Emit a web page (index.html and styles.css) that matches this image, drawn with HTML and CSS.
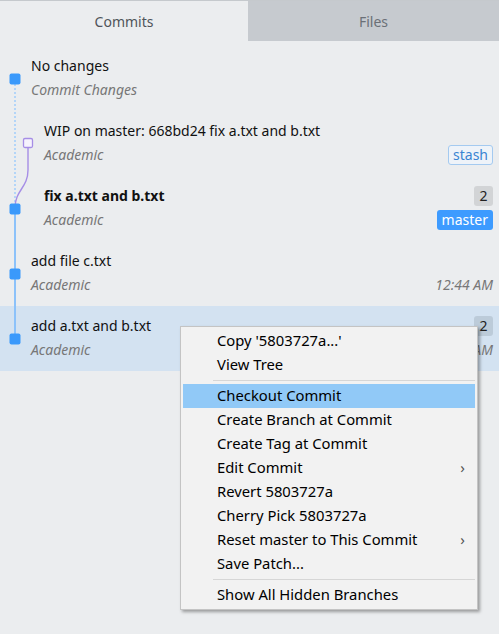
FILE: index.html
```html
<!DOCTYPE html>
<html>
<head>
<meta charset="utf-8">
<link rel="stylesheet" href="styles.css">
</head>
<body>
<div class="app">
  <div class="tabs">
    <div class="tab active">Commits</div>
    <div class="tab">Files</div>
  </div>
  <div class="list">
    <svg class="graph" width="40" height="330" viewBox="0 0 40 330">
      <line x1="15" y1="38" x2="15" y2="160" stroke="#b3d5f8" stroke-width="2" stroke-dasharray="2 2"/>
      <path d="M28 101 L28 124 C28 142 15 144 15 162" fill="none" stroke="#a68ee6" stroke-width="1.4"/>
      <line x1="15" y1="164" x2="15" y2="293" stroke="#8cc2fa" stroke-width="2"/>
      <rect x="9.5" y="27.5" width="11" height="11" rx="2" fill="#3a99fb"/>
      <rect x="23.5" y="92.5" width="9" height="9" rx="1.5" fill="#f6f3fd" stroke="#a68ee6" stroke-width="1.3"/>
      <rect x="9.5" y="157.5" width="11" height="11" rx="2" fill="#3a99fb"/>
      <rect x="9.5" y="222.5" width="11" height="11" rx="2" fill="#3a99fb"/>
      <rect x="9.5" y="287.5" width="11" height="11" rx="2" fill="#3a99fb"/>
    </svg>
    <div class="row">
      <div class="text">
        <div class="title">No changes</div>
        <div class="sub">Commit Changes</div>
      </div>
    </div>
    <div class="row indent">
      <div class="text">
        <div class="title">WIP on master: 668bd24 fix a.txt and b.txt</div>
        <div class="sub">Academic</div>
      </div>
      <div class="meta">
        <div class="line"></div>
        <div class="line"><span class="badge stash">stash</span></div>
      </div>
    </div>
    <div class="row indent">
      <div class="text">
        <div class="title bold">fix a.txt and b.txt</div>
        <div class="sub">Academic</div>
      </div>
      <div class="meta">
        <div class="line"><span class="badge count">2</span></div>
        <div class="line"><span class="badge master">master</span></div>
      </div>
    </div>
    <div class="row">
      <div class="text">
        <div class="title">add file c.txt</div>
        <div class="sub">Academic</div>
      </div>
      <div class="meta">
        <div class="line"></div>
        <div class="line"><span class="time">12:44 AM</span></div>
      </div>
    </div>
    <div class="row selected">
      <div class="text">
        <div class="title">add a.txt and b.txt</div>
        <div class="sub">Academic</div>
      </div>
      <div class="meta">
        <div class="line"><span class="badge count dark">2</span></div>
        <div class="line"><span class="time">12:44 AM</span></div>
      </div>
    </div>
  </div>

  <div class="menu">
    <div class="item">Copy '5803727a...'</div>
    <div class="item">View Tree</div>
    <div class="sep"></div>
    <div class="item hover">Checkout Commit</div>
    <div class="item">Create Branch at Commit</div>
    <div class="item">Create Tag at Commit</div>
    <div class="item">Edit Commit<span class="arrow">›</span></div>
    <div class="item">Revert 5803727a</div>
    <div class="item">Cherry Pick 5803727a</div>
    <div class="item">Reset master to This Commit<span class="arrow">›</span></div>
    <div class="item">Save Patch...</div>
    <div class="sep"></div>
    <div class="item">Show All Hidden Branches</div>
  </div>
</div>
</body>
</html>
```

FILE: styles.css
```css
* { box-sizing: border-box; }
html, body {
  margin: 0;
  padding: 0;
  background: #ebedef;
}
body {
  font-family: "Noto Sans", "Open Sans", sans-serif;
  font-size: 14px;
  color: #111;
  width: 499px;
  height: 634px;
  overflow: hidden;
}
.app {
  position: relative;
  height: 634px;
  border-top: 1px solid #c5c9cd;
}
.tabs {
  display: flex;
  height: 40px;
}
.tab {
  flex: 1;
  display: flex;
  align-items: center;
  justify-content: center;
  font-size: 14px;
  color: #6b7077;
  background: #c6cacf;
}
.tab.active {
  background: #ebedef;
  color: #4f545a;
  flex: 0 0 248px;
}
.list {
  position: relative;
  margin-top: 5px;
}
.graph {
  position: absolute;
  left: 0;
  top: 0;
}
.row {
  display: flex;
  height: 65px;
  padding: 8px 6px 9px 31px;
}
.row.indent { padding-left: 44px; }
.row.selected { background: #d3e2f1; }
.text {
  flex: 1;
  min-width: 0;
}
.title, .sub, .line {
  height: 24px;
  line-height: 24px;
  white-space: nowrap;
}
.title.bold { font-weight: bold; }
.sub {
  font-style: italic;
  color: #777;
}
.meta {
  display: flex;
  flex-direction: column;
  align-items: flex-end;
}
.line {
  display: flex;
  align-items: center;
  justify-content: flex-end;
}
.badge {
  display: inline-flex;
  align-items: center;
  justify-content: center;
  height: 20px;
  border-radius: 3px;
  padding: 0 4px;
  font-size: 14px;
}
.stash {
  border: 1px solid #a4caf0;
  color: #3a84d2;
  background: #eef3f9;
}
.master {
  background: #3d9bff;
  color: #fff;
  padding: 0 5px;
}
.count {
  background: #d2d4d6;
  color: #222;
  min-width: 19px;
}
.count.dark { background: #bccbd9; }
.time {
  font-style: italic;
  color: #777;
}
.menu {
  position: absolute;
  left: 180px;
  top: 325px;
  width: 298px;
  background: #f2f2f2;
  border: 1px solid #c4c4c4;
  padding: 2px;
  box-shadow: 2px 2px 3px rgba(0,0,0,0.35);
  font-size: 14.8px;
  color: #000;
}
.item {
  position: relative;
  height: 24px;
  line-height: 23px;
  padding-left: 34px;
  white-space: nowrap;
}
.item.hover { background: #91c9f7; }
.arrow {
  position: absolute;
  right: 10px;
  top: 0;
  color: #555;
  font-size: 15px;
}
.sep {
  height: 7px;
  margin-left: 30px;
  display: flex;
  align-items: center;
}
.sep::before {
  content: "";
  flex: 1;
  height: 1px;
  background: #d6d6d6;
}
```
